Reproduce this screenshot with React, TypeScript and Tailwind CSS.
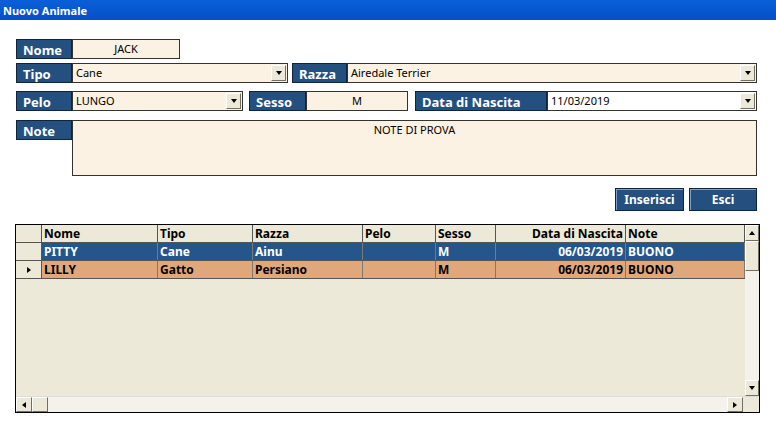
import React from "react"

const Arrow = ({ dir }: { dir: "down" | "up" | "left" | "right" }) => {
  const pts = { down: "1,2 7,2 4,6", up: "1,6 7,6 4,2", left: "6,1 6,7 2,4", right: "2,1 2,7 6,4" }[dir]
  return (
    <svg width="8" height="8" viewBox="0 0 8 8">
      <polygon points={pts} fill="#000" />
    </svg>
  )
}

const Btn = ({ dir, cls = "" }: { dir: "down" | "up" | "left" | "right"; cls?: string }) => (
  <div className={`flex items-center justify-center bg-[#ece9d8] border border-t-white border-l-white border-r-[#716f64] border-b-[#716f64] ${cls}`}>
    <Arrow dir={dir} />
  </div>
)

const Label = ({ text, w }: { text: string; w: string }) => (
  <div className={`${w} h-[20px] bg-[#23507f] border border-[#10243a] text-white font-bold text-[13px] leading-[20px] pl-[6px] shrink-0`}>
    {text}
  </div>
)

const Select = ({ value, w, bg = "bg-[#fcf2e3]" }: { value: string; w: string; bg?: string }) => (
  <div className={`${w} h-[20px] ${bg} border border-[#333] flex items-center shrink-0`}>
    <span className="flex-1 pl-[3px] text-[11px] font-['Liberation_Sans',sans-serif]">{value}</span>
    <Btn dir="down" cls="w-[15px] h-[16px] mr-[1px]" />
  </div>
)

const cols = [
  { name: "Nome", w: "w-[116px]" },
  { name: "Tipo", w: "w-[95px]" },
  { name: "Razza", w: "w-[110px]" },
  { name: "Pelo", w: "w-[73px]" },
  { name: "Sesso", w: "w-[60px]" },
  { name: "Data di Nascita", w: "w-[130px]", right: true },
  { name: "Note", w: "w-[119px]" },
]

const rows = [
  { vals: ["PITTY", "Cane", "Ainu", "", "M", "06/03/2019", "BUONO"], bg: "bg-[#24568c]", fg: "text-white", mark: false },
  { vals: ["LILLY", "Gatto", "Persiano", "", "M", "06/03/2019", "BUONO"], bg: "bg-[#e0a87a]", fg: "text-black", mark: true },
]

export default function App() {
  return (
    <div className="w-[776px] h-[428px] bg-white font-['DejaVu_Sans',sans-serif] flex flex-col overflow-hidden">
      <div className="h-[20px] bg-gradient-to-b from-[#0a5fd8] to-[#0450c8] text-white font-bold text-[11px] font-['Liberation_Sans',sans-serif] leading-[22px] pl-[3px]">
        Nuovo Animale
      </div>
      <div className="flex-1 flex">
        <div className="w-[3px] bg-[#0a4ed8]" />
        <div className="flex-1 pl-[16px] pr-[16px] pt-[19px] flex flex-col">
          <div className="flex">
            <Label text="Nome" w="w-[56px]" />
            <div className="w-[108px] h-[20px] bg-[#fcf2e3] border border-[#333] text-center text-[11px] leading-[18px] font-['Liberation_Sans',sans-serif]">JACK</div>
          </div>
          <div className="flex mt-[4px]">
            <Label text="Tipo" w="w-[56px]" />
            <Select value="Cane" w="w-[216px]" />
            <div className="w-[4px]" />
            <Label text="Razza" w="w-[55px]" />
            <Select value="Airedale Terrier" w="w-[410px]" />
          </div>
          <div className="flex mt-[8px]">
            <Label text="Pelo" w="w-[56px]" />
            <Select value="LUNGO" w="w-[171px]" />
            <div className="w-[6px]" />
            <Label text="Sesso" w="w-[57px]" />
            <div className="w-[102px] h-[20px] bg-[#fcf2e3] border border-[#333] text-center text-[11px] leading-[18px] font-['Liberation_Sans',sans-serif]">M</div>
            <div className="w-[7px]" />
            <Label text="Data di Nascita" w="w-[132px]" />
            <Select value="11/03/2019" w="w-[210px]" bg="bg-white" />
          </div>
          <div className="flex mt-[9px]">
            <Label text="Note" w="w-[56px]" />
            <div className="w-[685px] h-[56px] bg-[#fcf2e3] border border-[#333] text-center text-[11px] pt-[1px] font-['Liberation_Sans',sans-serif]">NOTE DI PROVA</div>
          </div>
          <div className="flex justify-end gap-[5px] mt-[12px] pr-[0px] w-[741px]">
            <div className="w-[69px] h-[23px] bg-[#23507f] border border-[#0e2540] text-white font-bold text-[12px] text-center leading-[21px] shadow-[inset_1px_1px_0_#7fa0c8]">Inserisci</div>
            <div className="w-[68px] h-[23px] bg-[#23507f] border border-[#0e2540] text-white font-bold text-[12px] text-center leading-[21px] shadow-[inset_1px_1px_0_#7fa0c8]">Esci</div>
          </div>
          <div className="mt-[13px] ml-[-1px] w-[745px] h-[189px] border border-black bg-[#ece9d8] flex flex-col text-[12px] font-bold">
            <div className="flex-1 flex min-h-0">
              <div className="flex-1 flex flex-col">
                <div className="flex h-[18px] border-b border-[#555]">
                  <div className="w-[26px] border-r border-[#555]" />
                  {cols.map((c) => (
                    <div key={c.name} className={`${c.w} border-r border-[#555] px-[2px] leading-[17px] ${c.right ? "text-right" : ""}`}>{c.name}</div>
                  ))}
                </div>
                {rows.map((r, i) => (
                  <div key={i} className="flex h-[18px] border-b border-[#555]">
                    <div className="w-[26px] border-r border-[#555] flex items-center justify-center">
                      {r.mark && <Arrow dir="right" />}
                    </div>
                    {r.vals.map((v, j) => (
                      <div key={j} className={`${cols[j].w} ${r.bg} ${r.fg} border-r border-[#7a7a7a] px-[2px] leading-[17px] ${cols[j].right ? "text-right" : ""}`}>{v}</div>
                    ))}
                  </div>
                ))}
              </div>
              <div className="w-[16px] flex flex-col bg-[#f4f2ea]">
                <Btn dir="up" cls="h-[16px]" />
                <div className="h-[30px] bg-[#ece9d8] border border-t-white border-l-white border-r-[#716f64] border-b-[#716f64]" />
                <div className="flex-1" />
                <Btn dir="down" cls="h-[16px]" />
              </div>
            </div>
            <div className="h-[16px] flex bg-[#f4f2ea] border-t border-[#ddd]">
              <Btn dir="left" cls="w-[16px]" />
              <div className="w-[16px] bg-[#ece9d8] border border-t-white border-l-white border-r-[#716f64] border-b-[#716f64]" />
              <div className="flex-1" />
              <Btn dir="right" cls="w-[16px]" />
              <div className="w-[16px] bg-[#ece9d8]" />
            </div>
          </div>
        </div>
      </div>
    </div>
  )
}
